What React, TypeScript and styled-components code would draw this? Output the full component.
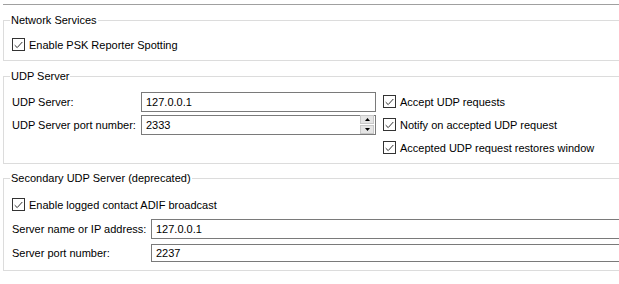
import React from 'react'
import styled, { createGlobalStyle } from 'styled-components'

const GlobalStyle = createGlobalStyle`
  html, body {
    margin: 0;
    padding: 0;
    background: #ffffff;
    overflow: hidden;
  }
  body {
    font-family: "Liberation Sans", Arial, sans-serif;
    font-size: 11px;
    color: #000;
  }
`;

const Page = styled.div`
  width: 680px;
  padding-left: 3px;
`;

const PrevEdge = styled.div`
  height: 4px;
  border-bottom: 1px solid #a0a0a0;
`;

const Group = styled.fieldset<{ $top: number; $padTop: number; $padBottom: number }>`
  margin: ${p => p.$top}px 0 0 0;
  border: 1px solid #dcdcdc;
  padding: ${p => p.$padTop}px 8px ${p => p.$padBottom}px 8px;
  min-width: 0;
`;

const Title = styled.legend`
  padding: 0 1px;
  margin-left: -2px;
  line-height: 15px;
  font-size: 11px;
`;

const CheckRow = styled.label`
  display: flex;
  align-items: center;
  gap: 4px;
  height: 21px;
  white-space: nowrap;
`;

const Box = styled.span`
  width: 11px;
  height: 11px;
  border: 1px solid #333333;
  background: #fff;
  display: flex;
  align-items: center;
  justify-content: center;
  flex: none;
`;

const UdpGrid = styled.div`
  display: grid;
  grid-template-columns: 129px 235px auto;
  grid-auto-rows: 21px;
  row-gap: 2px;
  column-gap: 0;
  align-items: center;
`;

const RightChecks = styled.div`
  grid-column: 3;
  grid-row: 1 / span 3;
  display: flex;
  flex-direction: column;
  gap: 2px;
  padding-left: 7px;
`;

const Label = styled.span`
  white-space: nowrap;
`;

const Field = styled.div<{ $h: number }>`
  height: ${p => p.$h}px;
  box-sizing: border-box;
  border: 1px solid #7a7a7a;
  background: #fff;
  display: flex;
  align-items: center;
  padding-left: 4px;
`;

const Spinner = styled.div`
  margin-left: auto;
  margin-right: 1px;
  width: 14px;
  display: flex;
  flex-direction: column;
  gap: 1px;
`;

const SpinButton = styled.div`
  height: 7px;
  background: #e5e5e5;
  border: 1px solid #c8c8c8;
  display: flex;
  align-items: center;
  justify-content: center;
`;

const SecondaryGrid = styled.div`
  display: grid;
  grid-template-columns: 139px 1fr;
  grid-template-rows: 21px 27px 22px;
  align-items: center;
`;

const SecondaryCheck = styled.div`
  grid-column: 1 / span 2;
`;

const Check = ({ label }: { label: string }) => (
  <CheckRow>
    <Box>
      <svg width="9" height="8" viewBox="0 0 9 8">
        <path d="M0.7 4.2 L3.2 6.6 L8.3 1" fill="none" stroke="#333" strokeWidth="1" />
      </svg>
    </Box>
    {label}
  </CheckRow>
)

const Arrow = ({ up }: { up: boolean }) => (
  <svg width="5" height="3" viewBox="0 0 5 3">
    <path d={up ? 'M0 3 L2.5 0 L5 3 Z' : 'M0 0 L2.5 3 L5 0 Z'} fill="#000" />
  </svg>
)

const App = () => {
  return (
    <Page>
      <GlobalStyle />
      <PrevEdge />

      <Group $top={8} $padTop={6} $padBottom={5}>
        <Title>Network Services</Title>
        <Check label="Enable PSK Reporter Spotting" />
      </Group>

      <Group $top={8} $padTop={7} $padBottom={5}>
        <Title>UDP Server</Title>
        <UdpGrid>
          <Label>UDP Server:</Label>
          <Field $h={20}>127.0.0.1</Field>
          <RightChecks>
            <Check label="Accept UDP requests" />
            <Check label="Notify on accepted UDP request" />
            <Check label="Accepted UDP request restores window" />
          </RightChecks>
          <Label>UDP Server port number:</Label>
          <Field $h={20}>
            2333
            <Spinner>
              <SpinButton><Arrow up /></SpinButton>
              <SpinButton><Arrow up={false} /></SpinButton>
            </Spinner>
          </Field>
        </UdpGrid>
      </Group>

      <Group $top={7} $padTop={8} $padBottom={6}>
        <Title>Secondary UDP Server (deprecated)</Title>
        <SecondaryGrid>
          <SecondaryCheck>
            <Check label="Enable logged contact ADIF broadcast" />
          </SecondaryCheck>
          <Label>Server name or IP address:</Label>
          <Field $h={20}>127.0.0.1</Field>
          <Label>Server port number:</Label>
          <Field $h={18}>2237</Field>
        </SecondaryGrid>
      </Group>
    </Page>
  )
}

export default App
